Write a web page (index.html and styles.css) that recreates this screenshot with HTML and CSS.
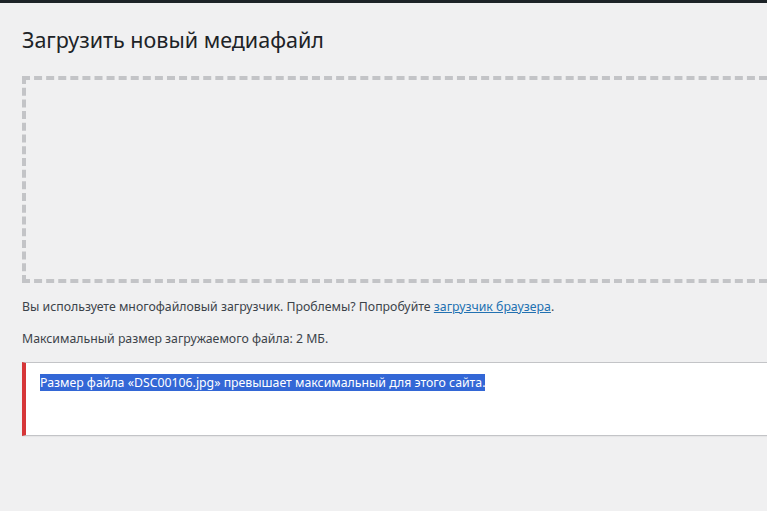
FILE: index.html
```html
<!DOCTYPE html>
<html lang="ru">
<head>
<meta charset="utf-8">
<link rel="stylesheet" href="styles.css">
</head>
<body>
<div class="adminbar"></div>
<div class="wrap">
  <h1 class="title">Загрузить новый медиафайл</h1>
  <div class="dropzone"></div>
  <p class="info">Вы используете многофайловый загрузчик. Проблемы? Попробуйте <a href="#" class="link">загрузчик браузера</a>.</p>
  <p class="info max">Максимальный размер загружаемого файла: 2 МБ.</p>
  <div class="notice">
    <p class="notice-text"><span class="sel">Размер файла «DSC00106.jpg» превышает максимальный для этого сайта.</span></p>
  </div>
</div>
</body>
</html>
```
FILE: styles.css
```css
html, body {
  margin: 0;
  padding: 0;
  background: #f0f0f1;
  overflow: hidden;
}
body {
  width: 767px;
  height: 511px;
  font-family: "Segoe UI", "Noto Sans", "Open Sans", sans-serif;
  color: #3c434a;
  font-size: 12.3px;
}
.adminbar {
  height: 3px;
  background: #1d2327;
}
.wrap {
  padding-left: 22px;
}
.title {
  margin: 0;
  padding-top: 22px;
  font-size: 21.5px;
  font-weight: 400;
  line-height: 30px;
  color: #1d2327;
}
.dropzone {
  margin-top: 21px;
  height: 199px;
  border: 4px dashed #c3c4c7;
  border-right: none;
}
.info {
  margin: 14px 0 0;
  line-height: 20px;
}
.max {
  margin-top: 12px;
}
.link {
  color: #2271b1;
}
.notice {
  margin-top: 13px;
  background: #fff;
  border: 1px solid #c3c4c7;
  border-left: 4px solid #d63638;
  border-right: none;
  height: 72px;
  box-shadow: 0 1px 1px rgba(0,0,0,.04);
}
.notice-text {
  margin: 10px 0 0 14px;
  line-height: 19px;
}
.sel {
  background: #3367d6;
  color: #fff;
}
```
